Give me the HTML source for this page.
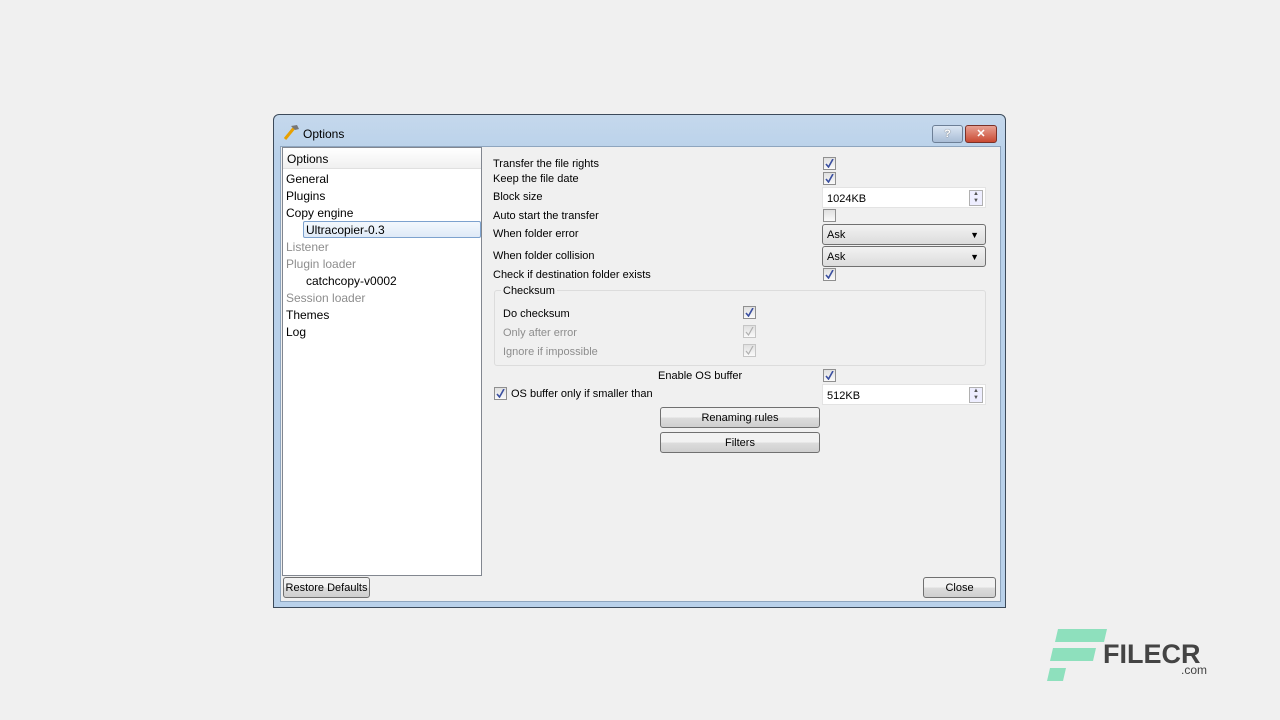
<!DOCTYPE html>
<html><head><meta charset="utf-8"><style>
body{margin:0;width:1280px;height:720px;background:#f0f0f0;position:relative;overflow:hidden;font-family:"Liberation Sans",sans-serif;font-size:11px;color:#000}
.a{position:absolute}
.win{left:273px;top:114px;width:731px;height:492px;border:1px solid #3c4a5a;border-radius:6px 6px 0 0;background:linear-gradient(#c5d8ec,#b9d1ea 40px);}
.client{left:280px;top:146px;width:719px;height:454px;background:#f0f0f0;border:1px solid #8ea5be}
.t{position:absolute;white-space:nowrap;line-height:13px;padding-top:1px}
.g{color:#8d8d8d}
.cb{position:absolute;width:11px;height:11px;border:1px solid #8f8f8f;background:linear-gradient(#e0e0e0,#fafafa)}
.cb svg{position:absolute;left:1px;top:1px}
.sel{position:absolute;height:19px;border:1px solid #707070;border-radius:3px;background:linear-gradient(#f2f2f2,#dcdcdc)}
.btn{position:absolute;border:1px solid #707070;border-radius:3px;background:linear-gradient(#f2f2f2 50%,#dddddd 50%,#cfcfcf);text-align:center;line-height:21px;height:19px}
.spin{position:absolute;height:19px;background:#fff;border:1px solid #e3e3e3}
</style></head><body>
<div class="a win"></div>
<svg class="a" style="left:283px;top:123px" width="18" height="18"><path d="M2 16 L11 5" stroke="#e8a000" stroke-width="3"/><path d="M8 3 L14 2 L16 6 L12 7 Z" fill="#777"/></svg>
<div class="t" style="left:303px;top:127px;font-size:12px">Options</div>
<div class="a" style="left:932px;top:125px;width:29px;height:16px;border:1px solid #6d7f96;border-radius:3px;background:linear-gradient(#dbe6f3,#a9bdd6);text-align:center;color:#fff;font-weight:bold;line-height:16px;text-shadow:0 0 1px #333">?</div>
<div class="a" style="left:965px;top:125px;width:30px;height:16px;border:1px solid #7a3128;border-radius:3px;background:linear-gradient(#e8a193,#c94a33);text-align:center;color:#fff;font-weight:bold;line-height:16px">✕</div>
<div class="a client"></div>
<div class="a" style="left:282px;top:147px;width:198px;height:427px;background:#fff;border:1px solid #828790"></div>
<div class="a" style="left:283px;top:148px;width:198px;height:20px;background:linear-gradient(#fff,#f0f0f0);border-bottom:1px solid #e0e0e0"></div>
<div class="t" style="left:287px;top:152px;font-size:12px">Options</div>
<div class="t" style="left:286px;top:172px;font-size:12px">General</div>
<div class="t" style="left:286px;top:189px;font-size:12px">Plugins</div>
<div class="t" style="left:286px;top:206px;font-size:12px">Copy engine</div>
<div class="a" style="left:303px;top:221px;width:176px;height:15px;border:1px solid #7da2ce;border-radius:2px;background:linear-gradient(#f3f8fd,#dfeaf7)"></div>
<div class="t" style="left:306px;top:223px;font-size:12px">Ultracopier-0.3</div>
<div class="t g" style="left:286px;top:240px;font-size:12px">Listener</div>
<div class="t g" style="left:286px;top:257px;font-size:12px">Plugin loader</div>
<div class="t" style="left:306px;top:274px;font-size:12px">catchcopy-v0002</div>
<div class="t g" style="left:286px;top:291px;font-size:12px">Session loader</div>
<div class="t" style="left:286px;top:308px;font-size:12px">Themes</div>
<div class="t" style="left:286px;top:325px;font-size:12px">Log</div>

<div class="t" style="left:493px;top:157px">Transfer the file rights</div>
<div class="t" style="left:493px;top:172px">Keep the file date</div>
<div class="t" style="left:493px;top:190px">Block size</div>
<div class="t" style="left:493px;top:209px">Auto start the transfer</div>
<div class="t" style="left:493px;top:227px">When folder error</div>
<div class="t" style="left:493px;top:249px">When folder collision</div>
<div class="t" style="left:493px;top:268px">Check if destination folder exists</div>

<div class="cb" style="left:823px;top:157px"><svg width="9" height="9"><path d="M1 5 L3.5 8 L8 0" stroke="#3a4fa0" stroke-width="1.6" fill="none"/></svg></div>
<div class="cb" style="left:823px;top:172px"><svg width="9" height="9"><path d="M1 5 L3.5 8 L8 0" stroke="#3a4fa0" stroke-width="1.6" fill="none"/></svg></div>
<div class="spin" style="left:822px;top:187px;width:162px"><span class="t" style="left:4px;top:4px">1024KB</span><span class="a" style="right:2px;top:2px;width:12px;height:14px;border:1px solid #b0b0b0;background:#eef;font-size:6px;line-height:7px;text-align:center;color:#555">▲<br>▼</span></div>
<div class="cb" style="left:823px;top:209px"></div>
<div class="sel" style="left:822px;top:224px;width:162px"><span class="t" style="left:4px;top:3px">Ask</span><span class="t" style="right:6px;top:3px;font-size:9px">▼</span></div>
<div class="sel" style="left:822px;top:246px;width:162px"><span class="t" style="left:4px;top:3px">Ask</span><span class="t" style="right:6px;top:3px;font-size:9px">▼</span></div>
<div class="cb" style="left:823px;top:268px"><svg width="9" height="9"><path d="M1 5 L3.5 8 L8 0" stroke="#3a4fa0" stroke-width="1.6" fill="none"/></svg></div>

<div class="a" style="left:494px;top:290px;width:490px;height:74px;border:1px solid #dcdcdc;border-radius:3px"></div>
<div class="t" style="left:501px;top:284px;background:#f0f0f0;padding:1px 2px 0">Checksum</div>
<div class="t" style="left:503px;top:307px">Do checksum</div>
<div class="t g" style="left:503px;top:326px">Only after error</div>
<div class="t g" style="left:503px;top:345px">Ignore if impossible</div>
<div class="cb" style="left:743px;top:306px"><svg width="9" height="9"><path d="M1 5 L3.5 8 L8 0" stroke="#3a4fa0" stroke-width="1.6" fill="none"/></svg></div>
<div class="cb" style="left:743px;top:325px;border-color:#c5c5c5"><svg width="9" height="9"><path d="M1 5 L3.5 8 L8 0" stroke="#b0b0b0" stroke-width="1.2" fill="none"/></svg></div>
<div class="cb" style="left:743px;top:344px;border-color:#c5c5c5"><svg width="9" height="9"><path d="M1 5 L3.5 8 L8 0" stroke="#b0b0b0" stroke-width="1.2" fill="none"/></svg></div>

<div class="t" style="left:658px;top:369px">Enable OS buffer</div>
<div class="cb" style="left:823px;top:369px"><svg width="9" height="9"><path d="M1 5 L3.5 8 L8 0" stroke="#3a4fa0" stroke-width="1.6" fill="none"/></svg></div>
<div class="cb" style="left:494px;top:387px"><svg width="9" height="9"><path d="M1 5 L3.5 8 L8 0" stroke="#3a4fa0" stroke-width="1.6" fill="none"/></svg></div>
<div class="t" style="left:511px;top:387px">OS buffer only if smaller than</div>
<div class="spin" style="left:822px;top:384px;width:162px"><span class="t" style="left:4px;top:4px">512KB</span><span class="a" style="right:2px;top:2px;width:12px;height:14px;border:1px solid #b0b0b0;background:#eef;font-size:6px;line-height:7px;text-align:center;color:#555">▲<br>▼</span></div>
<div class="btn" style="left:660px;top:407px;width:158px">Renaming rules</div>
<div class="btn" style="left:660px;top:432px;width:158px">Filters</div>

<div class="btn" style="left:283px;top:577px;width:85px">Restore Defaults</div>
<div class="btn" style="left:923px;top:577px;width:71px">Close</div>

<svg class="a" style="left:1046px;top:628px" width="62" height="55"><path d="M12 1 H61 L58 14 H9 Z" fill="#8ee0bd"/><path d="M7 20 H50 L47 33 H4 Z" fill="#8ee0bd"/><path d="M4 40 H20 L17 53 H1 Z" fill="#8ee0bd"/></svg>
<div class="t" style="left:1103px;top:639px;font-size:27px;line-height:30px;font-weight:bold;color:#444;padding:0">FILECR</div>
<div class="t" style="left:1181px;top:664px;font-size:12px;color:#444;padding:0">.com</div>
</body></html>
